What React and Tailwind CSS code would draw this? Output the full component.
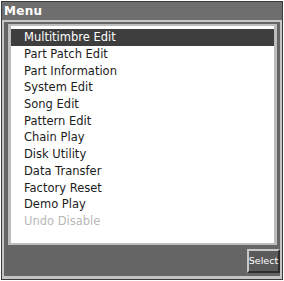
const items = [
  'Multitimbre Edit',
  'Part Patch Edit',
  'Part Information',
  'System Edit',
  'Song Edit',
  'Pattern Edit',
  'Chain Play',
  'Disk Utility',
  'Data Transfer',
  'Factory Reset',
  'Demo Play',
];

export default function App() {
  return (
    <div
      className="w-[284px] h-[281px] bg-white p-[1px]"
      style={{ fontFamily: '"DejaVu Sans", sans-serif' }}
    >
      <div className="h-full border border-[#3a3a3a] bg-[#6b6b6b] flex flex-col">
        {/* title bar */}
        <div className="h-[20px] bg-[#6e6e6e] border-b-2 border-[#c8c8c8] flex items-center pl-[2px]">
          <span className="text-white text-[12px] font-bold leading-none tracking-[0.3px]">Menu</span>
        </div>

        <div className="flex-1 flex flex-col border-l-2 border-r-2 border-[#c4c4c4] bg-[#656565]">
          {/* list */}
          <div className="mt-[2px] ml-[4px] mr-[3px] flex-1 border-l-[3px] border-r-[3px] border-b-2 border-t-2 border-[#bdbdbd] bg-white">
            <div className="pt-[3px]">
              {items.map((it, i) => (
                <div
                  key={it}
                  className={
                    i === 0
                      ? 'h-[17px] bg-[#3e3e3e] text-white text-[11.5px] leading-[17px] pl-[13px]'
                      : 'h-[16.7px] text-[#1c1c1c] text-[11.5px] leading-[17px] pl-[13px]'
                  }
                >
                  {it}
                </div>
              ))}
              <div className="h-[16.7px] text-[#b8b8b8] text-[11.5px] leading-[17px] pl-[13px]">
                Undo Disable
              </div>
            </div>
          </div>

          {/* bottom bar */}
          <div className="h-[31px] flex items-center justify-end pt-[1px]">
            <div className="h-[24px] w-[33px] border-2 border-t-[#c8c8c8] border-l-[#c8c8c8] border-r-[#2e2e2e] border-b-[#2e2e2e] bg-[#5a5a5a] flex items-center justify-center">
              <span className="text-white text-[9.5px] leading-none">Select</span>
            </div>
          </div>
        </div>
        <div className="h-[3px] bg-[#c4c4c4]" />
      </div>
    </div>
  );
}
